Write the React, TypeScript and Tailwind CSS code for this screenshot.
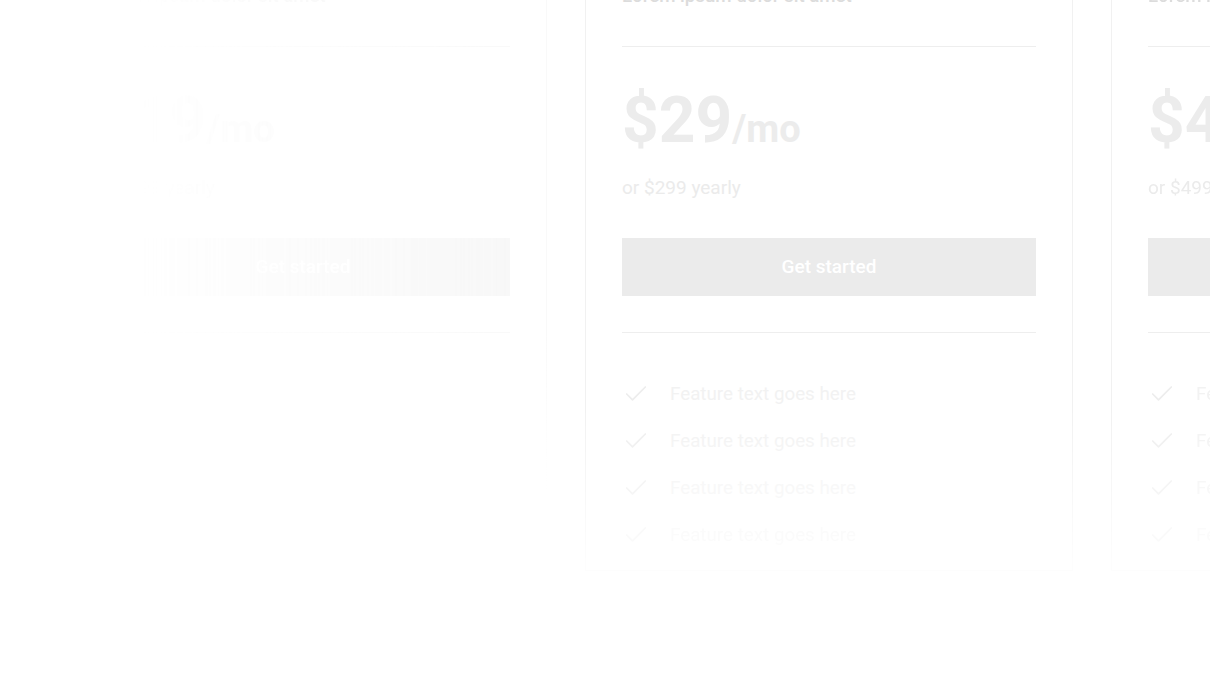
import { Check } from 'lucide-react';

type Plan = {
  title: string;
  price: string;
  yearly: string;
};

const plans: Plan[] = [
  { title: 'Lorem ipsum dolor sit amet', price: '$19', yearly: 'or $199 yearly' },
  { title: 'Lorem ipsum dolor sit amet', price: '$29', yearly: 'or $299 yearly' },
  { title: 'Lorem ipsum dolor sit amet', price: '$49', yearly: 'or $499 yearly' },
];

const features = [
  'Feature text goes here',
  'Feature text goes here',
  'Feature text goes here',
  'Feature text goes here',
];

function PlanCard({ plan, className, featureClass }: { plan: Plan; className?: string; featureClass?: string }) {
  return (
    <div className={`w-[488px] shrink-0 border border-[#f1f1f1] bg-white px-9 pt-8 pb-[21px] ${className ?? ''}`}>
      {/* Titel */}
      <h3 className="text-[18.7px] font-medium leading-6 text-[#dcdcdc]">{plan.title}</h3>
      <div className="mt-[38px] h-px bg-[#eeeeee]" />

      {/* Preis */}
      <div className="mt-[42px] flex items-baseline">
        <span className="text-[64px] font-bold leading-none text-[#ececec]">{plan.price}</span>
        <span className="text-[38px] font-bold leading-none text-[#ececec]">/mo</span>
      </div>
      <p className="mt-[23px] text-[19px] leading-6 text-[#ebebeb]">{plan.yearly}</p>

      <button className="mt-[38px] flex h-[58px] w-full items-center justify-center bg-[#ebebeb] text-[19px] font-medium text-white">
        Get started
      </button>

      <div className="mt-9 h-px bg-[#eeeeee]" />

      {/* Features */}
      <ul className={`mt-[47px] flex flex-col gap-[19px] ${featureClass ?? ''}`}>
        {features.map((f, i) => (
          <li key={i} className="flex h-7 items-center gap-5">
            <Check size={28} strokeWidth={1.5} className="shrink-0 text-[#ededed]" />
            <span className="text-[18.8px] font-normal leading-7 text-[#f2f2f2]">{f}</span>
          </li>
        ))}
      </ul>
    </div>
  );
}

export default function App() {
  return (
    <div className="h-[680px] w-[1210px] overflow-hidden bg-white font-['Roboto',sans-serif]">
      <div className="-mt-[49px] flex items-start gap-[38px] pl-[59px] [mask-image:linear-gradient(to_bottom,black_455px,transparent_640px)]">
        <PlanCard
          plan={plans[0]}
          featureClass="invisible"
          className="opacity-40 [mask-image:linear-gradient(to_right,transparent_15%,black_100%),linear-gradient(to_bottom,black_62%,transparent_88%)] [mask-composite:intersect]"
        />
        <PlanCard plan={plans[1]} />
        <PlanCard plan={plans[2]} />
      </div>
    </div>
  );
}
